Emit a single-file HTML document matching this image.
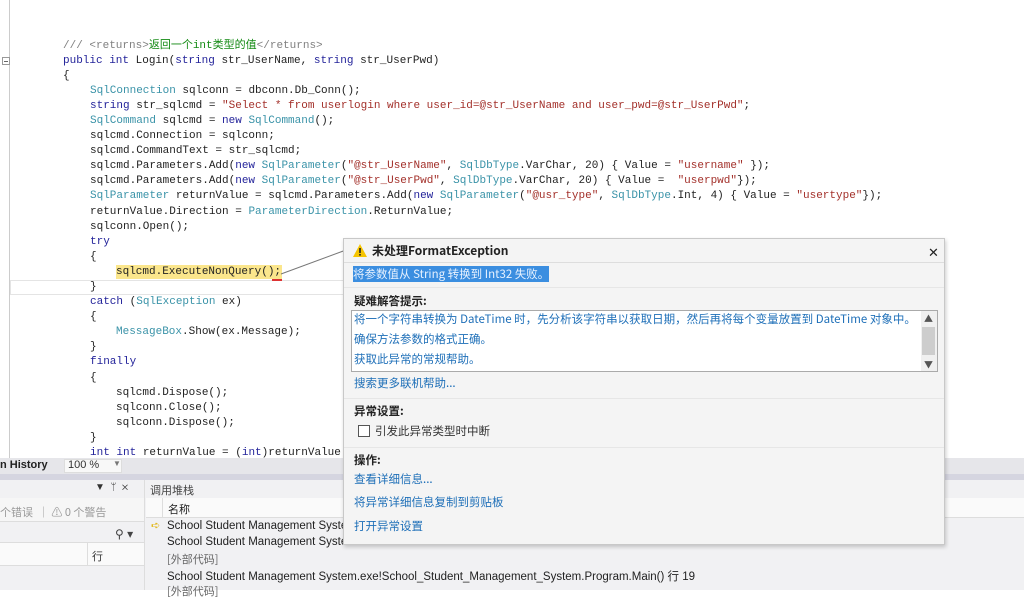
<!DOCTYPE html>
<html><head><meta charset="utf-8"><style>
*{margin:0;padding:0;box-sizing:border-box}
body{width:1024px;height:590px;overflow:hidden;background:#fff;position:relative;font-family:"Liberation Sans","Noto Sans CJK SC",sans-serif}
.code{position:absolute;left:0;top:0;width:1024px;height:458px;background:#fff}
.ln{position:absolute;white-space:pre;font-family:"Liberation Mono","Noto Sans CJK SC",monospace;font-size:11px;line-height:14px;color:#222}
.k{color:#23239a}.t{color:#3a93a8}.s{color:#a3302a}.c{color:#808080}.cg{color:#138a13}
.ui{position:absolute;white-space:nowrap;font-size:12px}
.dlg{position:absolute;left:343px;top:238px;width:602px;height:307px;background:#f4f4f4;border:1px solid #c8c8c8;box-shadow:1px 2px 4px rgba(0,0,0,.2)}
.dt{position:absolute;white-space:nowrap;font-family:"Noto Sans CJK SC","Liberation Sans",sans-serif;font-size:11.5px}
.lk{color:#1e6fb8}
</style></head><body>
<div class="code">
<div style="position:absolute;left:9px;top:0;width:1px;height:458px;background:#ccc"></div>
<div style="position:absolute;left:2px;top:57px;width:8px;height:8px;border:1px solid #999;background:#fff"></div>
<div style="position:absolute;left:4px;top:61px;width:4px;height:1px;background:#666"></div>
<div style="position:absolute;left:10px;top:280px;width:335px;height:15px;border:1px solid #e4e4e4"></div>
<div style="position:absolute;left:116px;top:265px;width:166px;height:14px;background:#fbe68c"></div>
<div style="position:absolute;left:272px;top:279px;width:10px;height:2px;background:#d33"></div>
<svg style="position:absolute;left:280px;top:248px" width="70" height="30"><line x1="1" y1="26" x2="66" y2="2" stroke="#777" stroke-width="1"/></svg>
<div class="ln" style="left:63px;top:39px"><span class="c">/// &lt;returns&gt;</span><span class="cg">返回一个int类型的值</span><span class="c">&lt;/returns&gt;</span></div>
<div class="ln" style="left:63px;top:54px"><span class="k">public int</span> Login(<span class="k">string</span> str_UserName, <span class="k">string</span> str_UserPwd)</div>
<div class="ln" style="left:63px;top:69px">{</div>
<div class="ln" style="left:90px;top:84px"><span class="t">SqlConnection</span> sqlconn = dbconn.Db_Conn();</div>
<div class="ln" style="left:90px;top:99px"><span class="k">string</span> str_sqlcmd = <span class="s">"Select * from userlogin where user_id=@str_UserName and user_pwd=@str_UserPwd"</span>;</div>
<div class="ln" style="left:90px;top:114px"><span class="t">SqlCommand</span> sqlcmd = <span class="k">new</span> <span class="t">SqlCommand</span>();</div>
<div class="ln" style="left:90px;top:129px">sqlcmd.Connection = sqlconn;</div>
<div class="ln" style="left:90px;top:144px">sqlcmd.CommandText = str_sqlcmd;</div>
<div class="ln" style="left:90px;top:159px">sqlcmd.Parameters.Add(<span class="k">new</span> <span class="t">SqlParameter</span>(<span class="s">"@str_UserName"</span>, <span class="t">SqlDbType</span>.VarChar, 20) { Value = <span class="s">"username"</span> });</div>
<div class="ln" style="left:90px;top:174px">sqlcmd.Parameters.Add(<span class="k">new</span> <span class="t">SqlParameter</span>(<span class="s">"@str_UserPwd"</span>, <span class="t">SqlDbType</span>.VarChar, 20) { Value =  <span class="s">"userpwd"</span>});</div>
<div class="ln" style="left:90px;top:189px"><span class="t">SqlParameter</span> returnValue = sqlcmd.Parameters.Add(<span class="k">new</span> <span class="t">SqlParameter</span>(<span class="s">"@usr_type"</span>, <span class="t">SqlDbType</span>.Int, 4) { Value = <span class="s">"usertype"</span>});</div>
<div class="ln" style="left:90px;top:205px">returnValue.Direction = <span class="t">ParameterDirection</span>.ReturnValue;</div>
<div class="ln" style="left:90px;top:220px">sqlconn.Open();</div>
<div class="ln" style="left:90px;top:235px"><span class="k">try</span></div>
<div class="ln" style="left:90px;top:250px">{</div>
<div class="ln" style="left:116px;top:265px">sqlcmd.ExecuteNonQuery();</div>
<div class="ln" style="left:90px;top:280px">}</div>
<div class="ln" style="left:90px;top:295px"><span class="k">catch</span> (<span class="t">SqlException</span> ex)</div>
<div class="ln" style="left:90px;top:310px">{</div>
<div class="ln" style="left:116px;top:325px"><span class="t">MessageBox</span>.Show(ex.Message);</div>
<div class="ln" style="left:90px;top:340px">}</div>
<div class="ln" style="left:90px;top:355px"><span class="k">finally</span></div>
<div class="ln" style="left:90px;top:371px">{</div>
<div class="ln" style="left:116px;top:386px">sqlcmd.Dispose();</div>
<div class="ln" style="left:116px;top:401px">sqlconn.Close();</div>
<div class="ln" style="left:116px;top:416px">sqlconn.Dispose();</div>
<div class="ln" style="left:90px;top:431px">}</div>
<div class="ln" style="left:90px;top:446px"><span class="k">int</span> <span class="k">int</span> returnValue = (<span class="k">int</span>)returnValue.</div>
</div>
<!-- bottom -->
<div style="position:absolute;left:0;top:458px;width:1024px;height:16px;background:#e6e6ea"></div>
<div class="ui" style="left:0;top:459px;font-weight:bold;font-size:11px;color:#222">n History</div>
<div style="position:absolute;left:64px;top:459px;width:58px;height:14px;background:#f8f8f8;border:1px solid #ddd"></div>
<div class="ui" style="left:68px;top:459px;font-size:11px;color:#333">100 %</div>
<div class="ui" style="left:113px;top:459px;font-size:8px;color:#777">▼</div>
<div style="position:absolute;left:0;top:474px;width:1024px;height:6px;background:#d5d5e0"></div>
<div style="position:absolute;left:0;top:480px;width:1024px;height:110px;background:#f1f1f3"></div>
<div style="position:absolute;left:144px;top:480px;width:1px;height:110px;background:#ddd"></div>
<div class="ui" style="left:95px;top:482px;font-size:10px;color:#333">▼ &nbsp;ᛘ&nbsp; ✕</div>
<div class="ui" style="left:150px;top:482px;color:#444;font-family:'Noto Sans CJK SC',sans-serif;font-size:11px">调用堆栈</div>
<div style="position:absolute;left:0;top:498px;width:144px;height:24px;background:#f6f6f6;border-bottom:1px solid #ddd"></div>
<div class="ui" style="left:0;top:504px;color:#999;font-family:'Noto Sans CJK SC',sans-serif;font-size:11px">个错误 &nbsp;│ ⚠ 0 个警告</div>
<div class="ui" style="left:115px;top:527px;color:#444">⚲ ▾</div>
<div style="position:absolute;left:0;top:542px;width:144px;height:24px;background:#fafafa;border-top:1px solid #ddd;border-bottom:1px solid #ddd"></div>
<div style="position:absolute;left:87px;top:542px;width:1px;height:24px;background:#ddd"></div>
<div class="ui" style="left:92px;top:548px;color:#333;font-family:'Noto Sans CJK SC',sans-serif;font-size:11px">行</div>
<div style="position:absolute;left:146px;top:498px;width:878px;height:20px;background:#fafafa;border-bottom:1px solid #ddd"></div>
<div style="position:absolute;left:162px;top:498px;width:1px;height:20px;background:#ddd"></div>
<div class="ui" style="left:168px;top:501px;color:#222;font-family:'Noto Sans CJK SC',sans-serif;font-size:11px">名称</div>
<div class="ui" style="left:151px;top:519px;color:#e0b000;font-size:11px">➪</div>
<div class="ui" style="left:167px;top:520px;color:#222;font-size:11.5px">School Student Management System</div>
<div class="ui" style="left:167px;top:536px;color:#222;font-size:11.5px">School Student Management System</div>
<div class="ui" style="left:167px;top:551px;color:#666;font-family:'Noto Sans CJK SC',sans-serif;font-size:11px">[外部代码]</div>
<div class="ui" style="left:167px;top:568px;color:#222;font-size:11.5px">School Student Management System.exe!School_Student_Management_System.Program.Main() <span style="font-family:'Noto Sans CJK SC'">行</span> 19</div>
<div class="ui" style="left:167px;top:583px;color:#666;font-family:'Noto Sans CJK SC',sans-serif;font-size:11px">[外部代码]</div>
<!-- dialog -->
<div class="dlg">
<div style="position:absolute;left:0;top:0;width:600px;height:24px;border-bottom:1px solid #ddd"></div>
<svg style="position:absolute;left:9px;top:5px" width="14" height="13"><polygon points="7,0 14,13 0,13" fill="#f5c400"/><rect x="6.2" y="4" width="1.6" height="5" fill="#222"/><rect x="6.2" y="10" width="1.6" height="1.6" fill="#222"/></svg>
<div class="dt" style="left:28px;top:3px;font-size:12px;font-weight:bold;color:#222">未处理FormatException</div>
<div class="dt" style="left:584px;top:3px;font-size:13px;color:#222">✕</div>
<div class="dt" style="left:9px;top:27px;font-size:11.5px;line-height:16px"><span style="background:#3b8ee0;color:#e8f2ff">将参数值从 String 转换到 Int32 失败。</span></div>
<div style="position:absolute;left:0;top:48px;width:600px;height:1px;background:#e6e6e6"></div>
<div class="dt" style="left:10px;top:54px;font-weight:bold;color:#222">疑难解答提示:</div>
<div style="position:absolute;left:7px;top:71px;width:587px;height:62px;background:#fff;border:1px solid #aaa"></div>
<div class="dt lk" style="left:10px;top:72px">将一个字符串转换为 DateTime 时，先分析该字符串以获取日期，然后再将每个变量放置到 DateTime 对象中。</div>
<div class="dt lk" style="left:10px;top:92px">确保方法参数的格式正确。</div>
<div class="dt lk" style="left:10px;top:112px">获取此异常的常规帮助。</div>
<div style="position:absolute;left:577px;top:72px;width:16px;height:60px;background:#f0f0f0"></div>
<div style="position:absolute;left:578px;top:88px;width:13px;height:28px;background:#cdcdcd"></div>
<div class="dt" style="left:580px;top:73px;font-size:9px;color:#555">▲</div>
<div class="dt" style="left:580px;top:119px;font-size:9px;color:#555">▼</div>
<div class="dt lk" style="left:10px;top:136px">搜索更多联机帮助...</div>
<div style="position:absolute;left:0;top:159px;width:600px;height:1px;background:#e6e6e6"></div>
<div class="dt" style="left:10px;top:164px;font-weight:bold;color:#222">异常设置:</div>
<div style="position:absolute;left:14px;top:186px;width:12px;height:12px;border:1px solid #555;background:#fff"></div>
<div class="dt" style="left:31px;top:184px;color:#333">引发此异常类型时中断</div>
<div style="position:absolute;left:0;top:208px;width:600px;height:1px;background:#e6e6e6"></div>
<div class="dt" style="left:10px;top:213px;font-weight:bold;color:#222">操作:</div>
<div class="dt lk" style="left:10px;top:232px">查看详细信息...</div>
<div class="dt lk" style="left:10px;top:255px">将异常详细信息复制到剪贴板</div>
<div class="dt lk" style="left:10px;top:279px">打开异常设置</div>
</div>
</body></html>
